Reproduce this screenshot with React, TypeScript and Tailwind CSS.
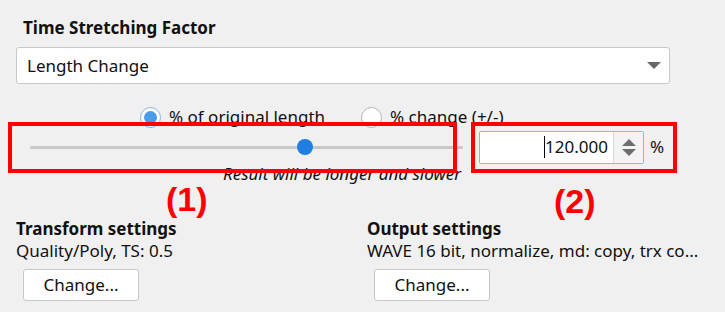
import React from "react";

function Radio({ checked, label }: { checked: boolean; label: string }) {
  return (
    <label className="flex items-center gap-[8px]">
      <span
        className={`flex h-[21px] w-[21px] items-center justify-center rounded-full border bg-white ${
          checked ? "border-[#7fb2e8]" : "border-[#b4b4b4]"
        }`}
      >
        {checked && <span className="h-[13px] w-[13px] rounded-full bg-[#4a9be8]" />}
      </span>
      <span>{label}</span>
    </label>
  );
}

function ChangeButton() {
  return (
    <button className="h-[32px] w-[116px] rounded-[3px] border border-[#c8c8c8] bg-white text-[17px] text-[#111]">
      Change...
    </button>
  );
}

export default function App() {
  return (
    <main
      className="relative h-[312px] w-[725px] overflow-hidden bg-[#f0f0f0] text-[17px] text-[#111]"
      style={{ fontFamily: '"Noto Sans", "Open Sans", sans-serif' }}
    >
      <div className="px-[16px] pt-[16px]">
        <h1 className="pl-[7px] font-bold leading-[24px]">Time Stretching Factor</h1>

        {/* dropdown */}
        <div className="mt-[7px] flex h-[37px] w-[654px] items-center justify-between rounded-[3px] border border-[#c8c8c8] bg-white pl-[10px] pr-[8px]">
          <span>Length Change</span>
          <svg width="14" height="8" viewBox="0 0 14 8">
            <path d="M0 0 H14 L7 7 Z" fill="#666" />
          </svg>
        </div>

        {/* radios */}
        <div className="mt-[21px] flex h-[24px] items-center gap-[36px] pl-[124px]">
          <Radio checked label="% of original length" />
          <Radio checked={false} label="% change (+/-)" />
        </div>

        {/* slider + spin */}
        <div className="mt-[1px] flex h-[34px] items-center">
          <div className="relative ml-[14px] h-[3px] w-[433px] rounded bg-[#c8c8c8]">
            <span className="absolute left-[267px] top-[-7px] h-[16px] w-[16px] rounded-full bg-[#1e7fe0]" />
          </div>
          <div className="ml-[16px] flex h-[33px] w-[165px] items-stretch rounded-[2px] border border-[#8cb8e6] bg-white">
            <div className="flex flex-1 items-center justify-end pr-[5px]">
              <span className="h-[22px] w-px bg-black" />
              <span>120.000</span>
            </div>
            <div className="flex w-[30px] items-center justify-center border-l border-[#d9d9d9] bg-[#f3f3f3]">
              <svg width="14" height="17" viewBox="0 0 14 17">
                <path d="M7 0 L14 7 H0 Z M0 10 H14 L7 17 Z" fill="#6e6e6e" />
              </svg>
            </div>
          </div>
          <span className="ml-[6px]">%</span>
        </div>

        <p className="mt-[-1px] w-[445px] text-right italic leading-[22px]">Result will be longer and slower</p>

        {/* settings */}
        <div className="mt-[33px] flex">
          <div className="w-[351px]">
            <h2 className="font-bold leading-[22px]">Transform settings</h2>
            <p className="leading-[22px]">Quality/Poly, TS: 0.5</p>
            <div className="mt-[7px] pl-[7px]">
              <ChangeButton />
            </div>
          </div>
          <div>
            <h2 className="font-bold leading-[22px]">Output settings</h2>
            <p className="leading-[22px]">WAVE 16 bit, normalize, md: copy, trx co...</p>
            <div className="mt-[7px] pl-[7px]">
              <ChangeButton />
            </div>
          </div>
        </div>
      </div>

      {/* annotation overlays */}
      <div className="pointer-events-none absolute left-[8px] top-[122px] h-[51px] w-[449px] border-[4px] border-[#ff0000]" />
      <div className="pointer-events-none absolute left-[471px] top-[122px] h-[51px] w-[206px] border-[4px] border-[#ff0000]" />
      <span
        className="pointer-events-none absolute left-[166px] top-[180px] text-[34px] font-bold leading-[38px] text-[#ff0000]"
        style={{ fontFamily: '"Liberation Sans", Arial, sans-serif' }}
      >
        (1)
      </span>
      <span
        className="pointer-events-none absolute left-[554px] top-[182px] text-[34px] font-bold leading-[38px] text-[#ff0000]"
        style={{ fontFamily: '"Liberation Sans", Arial, sans-serif' }}
      >
        (2)
      </span>
    </main>
  );
}
